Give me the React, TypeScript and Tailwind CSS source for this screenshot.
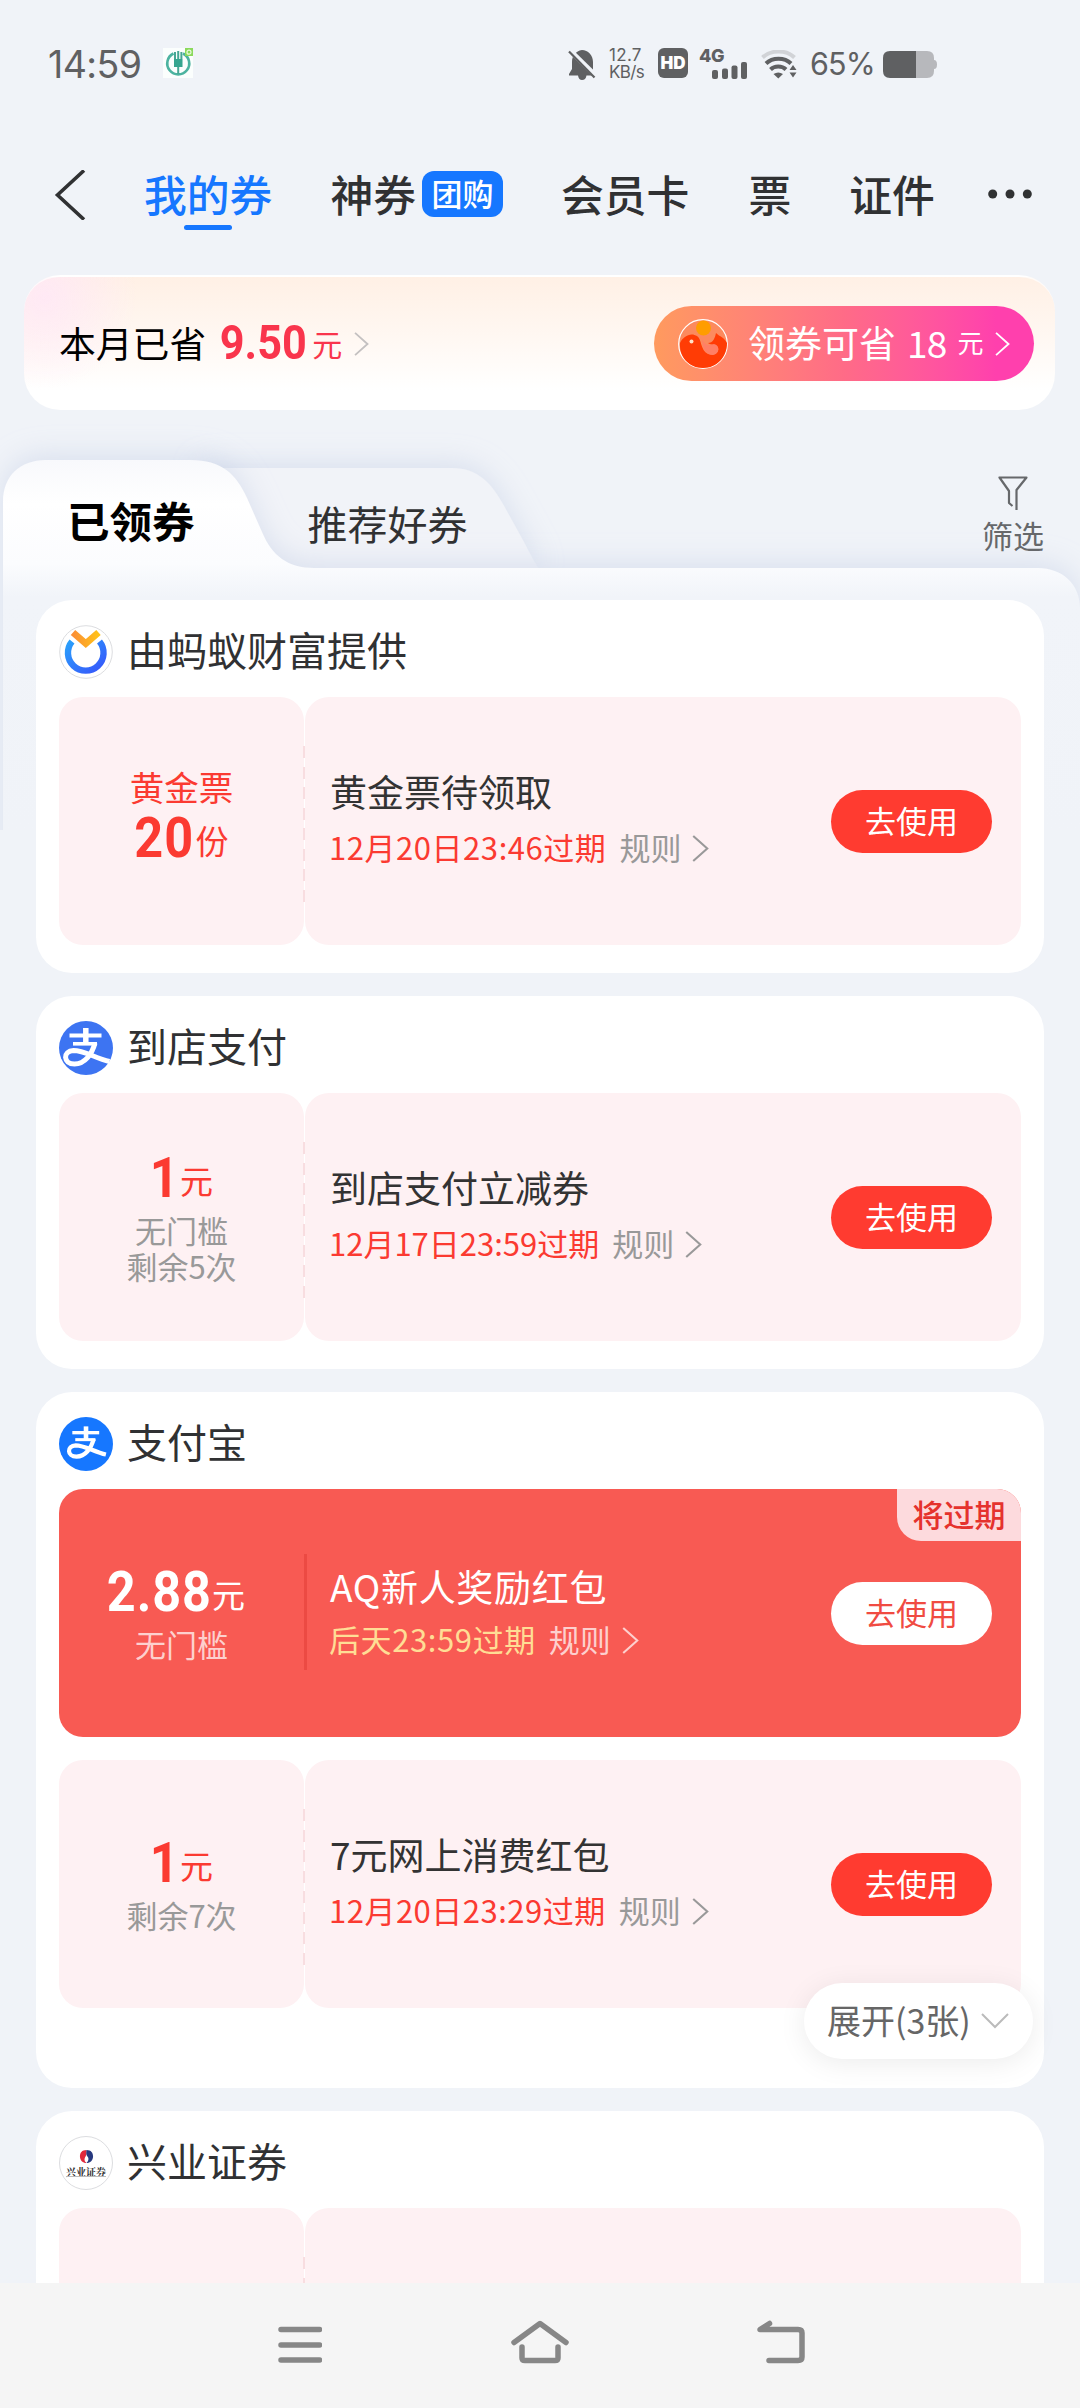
import type { ReactNode } from 'react';
import clsx from 'clsx';

type Coupon = {
  label?: string;
  amount: string;
  amountWidth: string;
  unit: string;
  notes?: string[];
  title: string;
  expire: string;
  expireSpacing?: string;
  urgent?: boolean;
};

const navItems = [
  { label: "神券", badge: "团购", className: "ml-[58px]" },
  { label: "会员卡", className: "ml-[58px]" },
  { label: "票", className: "ml-[59px]" },
  { label: "证件", className: "ml-[58px]" }
];

const goldTicket: Coupon = {
  label: "黄金票",
  amount: "20",
  amountWidth: "w-[60px]",
  unit: "份",
  title: "黄金票待领取",
  expire: "12月20日23:46过期",
  expireSpacing: "tracking-[0.55px]"
};

const storePay: Coupon = {
  amount: "1",
  amountWidth: "w-[29px]",
  unit: "元",
  notes: ["无门槛", "剩余5次"],
  title: "到店支付立减券",
  expire: "12月17日23:59过期"
};

const newUserBonus: Coupon = {
  amount: "2.88",
  amountWidth: "w-[104px]",
  unit: "元",
  notes: ["无门槛"],
  title: "AQ新人奖励红包",
  expire: "后天23:59过期",
  expireSpacing: "tracking-[0.6px]",
  urgent: true
};

const onlineBonus: Coupon = {
  amount: "1",
  amountWidth: "w-[29px]",
  unit: "元",
  notes: ["剩余7次"],
  title: "7元网上消费红包",
  expire: "12月20日23:29过期",
  expireSpacing: "tracking-[0.5px]"
};

function Chevron({ className }: { className: string }) {
  return (
    <svg viewBox="0 0 16 26" className={className} fill="none" stroke="currentColor" strokeWidth="2">
      <path d="M1 1 L14.5 13 L1 25" />
    </svg>
  );
}

function StatusBar() {
  return (
    <div className="flex h-[129px] items-center pl-[48px] text-[#5f6062]">
      <span className="w-[115px] font-['Inter'] text-[37.500px] leading-none tracking-[-0.6px]">14:59</span>
      <svg viewBox="0 0 30 30" className="mt-[-3px] h-[30px] w-[30px]" fill="none">
        <rect width="30" height="30" fill="#fbfefd" />
        <path d="M10.500 5.500 A11 11 0 1 0 20 5.500" stroke="#4cb3a0" strokeWidth="2.600" />
        <path d="M15.200 3 V26 M12 4 V11 M18.400 4 V11" stroke="#46a794" strokeWidth="2" />
        <rect x="11" y="11" width="8.500" height="8" fill="#36a58f" />
        <rect x="22" width="8" height="8" fill="#8bd95c" />
        <circle cx="26" cy="4.200" r="2" stroke="#e9fadd" strokeWidth="1.200" />
      </svg>

      <svg viewBox="0 0 28 32" className="ml-[375px] h-[32px] w-[28px]">
        <path d="M14 1 C7.500 2 4 7 4 13 V20 L1 25 V26.500 H10 C10.500 29.500 12 31 14 31 C16.500 31 18 29.500 18.500 26.500 H25 V13 C25 6 20 1 14 1 Z" fill="#5f6062" />
        <path d="M1.500 1 L28 27" stroke="#f0f3f8" strokeWidth="5" />
        <path d="M1 2.500 L26.500 28.500" stroke="#5f6062" strokeWidth="2.200" />
      </svg>
      <div className="ml-[13px] mt-[-2px] w-[38px] font-['Inter'] text-[17px] leading-[16.500px]">
        <div className="tracking-[0.3px]">12.7</div>
        <div className="tracking-[-0.6px]">KB/s</div>
      </div>
      <div className="ml-[11px] mt-[-3px] flex h-[30px] w-[30px] items-center justify-center rounded-[6px] bg-[#5f6062] font-['Inter'] text-[17px] font-black leading-none text-white">
        HD
      </div>
      <div className="relative ml-[11px] mt-[-2px] h-[30px] w-[50px]">
        <span className="absolute left-0 top-0 font-['Inter'] text-[18px] font-extrabold leading-[14px] tracking-[-0.5px]">4G</span>
        <svg viewBox="0 0 36 17" className="absolute bottom-0 left-[13px] h-[17px] w-[36px]" fill="#5f6062">
          <rect x="0" y="8" width="6" height="9" rx="2" />
          <rect x="10" y="6.500" width="6" height="10.500" rx="2" />
          <rect x="19.500" y="3.500" width="6" height="13.500" rx="2" />
          <rect x="29" y="0" width="6" height="17" rx="2" />
        </svg>
      </div>
      <svg viewBox="0 0 36 29" className="ml-[12px] mt-[-1px] h-[29px] w-[36px]" fill="none">
        <path d="M1.500 7.500 C10 -0.500 25 -0.500 33.500 7.500" stroke="#d1d3d7" strokeWidth="4" />
        <path d="M5 13.500 C11.500 7 23.500 7 30 13.500" stroke="#5f6062" strokeWidth="4" />
        <path d="M9.500 19.500 C13.500 15.500 21 15.500 25 19.500" stroke="#5f6062" strokeWidth="4" />
        <path d="M12.500 24 Q17.300 21 22 24 L17.300 28.500 Z M28.500 20 L32 15 L35.500 20 Z M28.500 22.500 L32 27.500 L35.500 22.500 Z" fill="#5f6062" />
      </svg>
      <span className="ml-[13px] w-[73px] font-['Inter'] text-[30.500px] leading-none tracking-[-0.9px]">65%</span>
      <svg viewBox="0 0 54 27" className="mt-[-1px] h-[27px] w-[54px]">
        <path d="M7 0 H44 Q51 0 51 7 V9 Q54 9 54 13.500 Q54 18 51 18 V20 Q51 27 44 27 H7 Z" fill="#b7b8bc" />
        <path d="M33 0 H7 Q0 0 0 7 V20 Q0 27 7 27 H33 Z" fill="#5f6062" />
      </svg>
    </div>
  );
}

function NavBar() {
  return (
    <div className="flex h-[146px] items-start pl-[54px] text-[42.800px] font-medium leading-[60px] text-[#303133]">
      <svg viewBox="0 0 32 50" className="mt-[41px] h-[50px] w-[32px]" fill="none" stroke="#303133" strokeWidth="3.600">
        <path d="M30 0.500 L3.500 25 L30 49.500" />
      </svg>
      <div className="ml-[58px] mt-[34px] flex flex-col items-center text-[#1677ff]">
        我的券
        <span className="mt-[2px] h-[5px] w-[48px] rounded-full bg-[#1677ff]" />
      </div>
      {navItems.map((item) => (
        <div key={item.label} className={clsx("mt-[34px] flex items-center", item.className)}>
          {item.label}
          {item.badge && (
            <span className="ml-[6px] mt-px flex h-[46px] w-[81px] items-center justify-center rounded-[12px] bg-[#1677ff] text-[31px] leading-[44px] text-white">
              <span className="mt-[-2px]">{item.badge}</span>
            </span>
          )}
        </div>
      ))}
      <svg viewBox="0 0 44 10" className="ml-[53px] mt-[60px] h-[10px] w-[44px]" fill="#303133">
        <circle cx="4.700" cy="5" r="4.500" />
        <circle cx="22" cy="5" r="4.500" />
        <circle cx="39.300" cy="5" r="4.500" />
      </svg>
    </div>
  );
}

function SavingsBanner() {
  return (
    <div className="ml-[24px] flex h-[135px] w-[1031px] items-center rounded-[36px] border-t-2 border-white/70 bg-[radial-gradient(circle_at_2%_15%,rgba(255,232,246,0.9),transparent_9%),linear-gradient(to_bottom,#fff0e5_0%,#fff7f1_42%,#ffffff_85%)] pl-[35px] pr-[21px]">
      <span className="mt-[-3px] text-[36.800px] leading-none text-black">本月已省</span>
      <span className="ml-[14px] mt-[-2px] flex w-[86px] justify-center">
        <span className="inline-block scale-x-[0.9] font-['Roboto'] text-[48px] font-bold leading-none text-[#f9354c]">9.50</span>
      </span>
      <span className="ml-[6px] mt-[-2px] text-[30px] leading-none text-[#f9354c]">元</span>
      <Chevron className="ml-[12px] h-[24px] w-[15px] text-[#c4c1c1]" />

      <div className="ml-auto flex h-[75px] w-[380px] items-center rounded-full bg-linear-to-r from-[#ff9a5e] via-[#ff6b87] via-50% to-[#ff40ad] to-90% pl-[24px] text-white">
        <svg viewBox="0 0 50 50" className="h-[50px] w-[50px]">
          <circle cx="25" cy="25" r="24.300" fill="#fc8a5e" stroke="#fff" strokeWidth="1.200" />
          <circle cx="25.500" cy="9" r="7.500" fill="#ff9d00" />
          <path d="M2 24 C5 17 13 13 19 17 C24 20 22 31 30 35 C37 38 43 32 39 27 C36 25 32 26 30 24 C35 24 37 19 38 14 C42 18 46 18 49 24 C49 38 39 49 25 49 C11 49 1 38 2 24 Z" fill="#ff3c05" />
          <path d="M24 20 C27 27 31 27 36 25 C42 26 42 35 35 36 C26 35 25 29 24 20 Z" fill="#ff7f66" />
          <circle cx="13.500" cy="22.500" r="2" fill="#ffe2c8" />
        </svg>
        <span className="ml-[20px] mt-[-3px] text-[37px] leading-none">领券可省</span>
        <span className="ml-[11px] mt-[-3px] text-[37px] leading-none tracking-[-0.8px]">18</span>
        <span className="ml-[11px] mt-[-3px] text-[26px] leading-none">元</span>
        <Chevron className="ml-[11px] h-[24px] w-[15px]" />
      </div>
    </div>
  );
}

// Folder-shaped tabs; the first one runs into the sheet below
function TabShapes() {
  return (
    <svg viewBox="0 410 1080 440" className="absolute left-0 top-0 h-[440px] w-[1080px]" fill="none">
      <defs>
        <linearGradient id="front" gradientUnits="userSpaceOnUse" x1="0" y1="460" x2="0" y2="830">
          <stop offset="0" stopColor="#f8f9fc" />
          <stop offset="0.12" stopColor="#ffffff" />
          <stop offset="0.28" stopColor="#fbfcfe" />
          <stop offset="0.37" stopColor="#f1f4f9" />
          <stop offset="1" stopColor="#f0f3f8" />
        </linearGradient>
        <filter id="lift" filterUnits="userSpaceOnUse" x="-30" y="410" width="1140" height="420">
          <feDropShadow dx="0" dy="-5" stdDeviation="14" floodColor="#b9c5e0" floodOpacity="0.42" />
        </filter>
      </defs>
      <path filter="url(#lift)" d="M200 468 H452 C478 468 492 484 503 504 L524 542 Q534 562 541 572 H200 Z" fill="#f1f3f8" />
      <path
        filter="url(#lift)"
        d="M3 870 V502 C3 476 20 460 46 460 H190 C222 460 236 474 247 498 L262 532 C272 556 288 568 314 568 H1038 C1062 568 1080 584 1080 608 V870 Z"
        fill="url(#front)"
      />
    </svg>
  );
}

function Tabs() {
  return (
    <div className="flex h-[190px] items-start">
      <div className="ml-[67px] mt-[80px] text-[42.500px] font-bold leading-[60px] text-black">已领券</div>
      <div className="ml-[113px] mt-[83px] text-[40px] leading-[60px] text-[#303133]">推荐好券</div>
      <div className="ml-auto mr-[36px] mt-[66px] flex flex-col items-center text-[#66686b]">
        <svg viewBox="0 0 30 35" className="h-[35px] w-[30px]" fill="none" stroke="#66686b" strokeWidth="2.200" strokeLinejoin="round">
          <path d="M14.500 30 L11 27 V15 L1.500 1.500 H28.500 L18.500 14 V34" />
        </svg>
        <span className="mt-[2px] text-[31px] leading-[44px]">筛选</span>
      </div>
    </div>
  );
}

function AlipayLogo({ small }: { small?: boolean }) {
  return (
    <svg viewBox="0 0 54 54" className="h-[54px] w-[54px]" fill="none">
      <circle cx="27" cy="27" r="27" fill={small ? "#1677ff" : "#3d74f2"} />
      <g transform={small ? "translate(4.500 3.500) scale(0.84)" : undefined} stroke="#fff">
        <path d="M26.800 7 V22" strokeWidth="5.500" />
        <path d="M10.500 14.500 H42.500" strokeWidth="4" />
        <path d="M14 22.800 H38" strokeWidth="3.600" />
        <path d="M36 22 C33 33 26 43 15.500 43 C4 43 3.500 30 14.500 29.500 C25 29.500 36 37 50.500 40.500" strokeWidth="5" />
      </g>
    </svg>
  );
}

function AntFortuneLogo() {
  return (
    <svg viewBox="0 0 54 54" className="h-[54px] w-[54px]" fill="none">
      <defs>
        <linearGradient id="ring" x1="0" y1="0" x2="1" y2="1">
          <stop offset="0" stopColor="#2aa0fb" />
          <stop offset="1" stopColor="#3656fb" />
        </linearGradient>
        <linearGradient id="tick" x1="0" y1="0" x2="1" y2="0">
          <stop offset="0" stopColor="#fb8f35" />
          <stop offset="1" stopColor="#ffc219" />
        </linearGradient>
      </defs>
      <circle cx="27" cy="27" r="26.300" fill="#fff" stroke="#dcdde0" strokeWidth="1" />
      <path d="M13 16.500 A17.800 17.800 0 1 0 40.500 16.500" stroke="url(#ring)" strokeWidth="6.400" />
      <path d="M14 7.500 L26.800 18.500 L39.500 7.500" stroke="url(#tick)" strokeWidth="6.800" />
    </svg>
  );
}

function IndustrialLogo() {
  return (
    <div className="flex h-[54px] w-[54px] flex-col items-center rounded-full border border-[#dcdde0] bg-white pt-[12px]">
      <svg viewBox="0 0 16 16" className="h-[15px] w-[15px]">
        <path d="M8 1 C3 1 1 4 1 8 C1 12 4 15 8 15 C6 13 5 11 7 8 C8 6 8 4 8 1 Z" fill="#e0283c" />
        <path d="M8 1 C13 1 15 4 15 8 C15 12 12 15 8 15 C10 13 11 10 9 8 C7 6 8 3 8 1 Z" fill="#27397f" />
      </svg>
      <span className="mt-[2px] whitespace-nowrap font-['Noto_Serif_CJK_SC','Noto_Sans_CJK_SC',serif] text-[10px] font-bold leading-[11px] text-[#333]">兴业证券</span>
      <span className="mt-[-1px] h-px w-[40px] bg-[#bbb]" />
    </div>
  );
}

function CouponRow({ coupon }: { coupon: Coupon }) {
  const { urgent } = coupon;
  return (
    <div className={clsx("relative flex h-[248px]", urgent && "overflow-hidden rounded-[24px] bg-[#f85a53]")}>
      <div
        className={clsx(
          "flex w-[245px] flex-col items-center justify-center",
          urgent ? "text-white" : "rounded-[24px] bg-[#fef1f3] text-[#fb3a31]"
        )}
      >
        {coupon.label && <div className="mb-[3px] mt-[-14px] text-[34.500px] leading-[44px]">{coupon.label}</div>}
        <div className={clsx("flex h-[54px] items-center", coupon.notes && "mb-[7px]", urgent && "mr-[11px]")}>
          <span className={clsx("flex justify-center", coupon.amountWidth)}>
            <span className="inline-block scale-x-[0.9] font-['Roboto'] text-[56px] font-bold leading-none tracking-[1px]">{coupon.amount}</span>
          </span>
          <span className="ml-px mt-[5px] text-[33px] leading-none">{coupon.unit}</span>
        </div>
        {coupon.notes?.map((note) => (
          <div key={note} className={clsx("text-[31px] leading-[36px]", urgent ? "text-[#fdd0ce]" : "text-[#999]")}>
            {note}
          </div>
        ))}
      </div>
      <div className={clsx("ml-px flex flex-1 items-center pl-[25px] pr-[29px]", !urgent && "rounded-[24px] bg-[#fef1f3]")}>
        <div className="mb-[4px]">
          <div className={clsx("text-[37px] leading-[56px]", urgent ? "tracking-[0.7px] text-white" : "text-[#333]")}>{coupon.title}</div>
          <div className={clsx("flex items-center text-[31px]", urgent ? "leading-[50px]" : "leading-[56px]")}>
            <span className={clsx("ml-[-1px]", coupon.expireSpacing, urgent ? "text-[#ffdd95]" : "text-[#fb3a31]")}>{coupon.expire}</span>
            <span className={clsx("ml-[13px]", urgent ? "text-[#fdd0ce]" : "text-[#999]")}>规则</span>
            <Chevron className={clsx("ml-[11px] mt-[3px] h-[27px] w-[17px]", urgent ? "text-[#fdd0ce]" : "text-[#999]")} />
          </div>
        </div>
        <button
          className={clsx(
            "ml-auto h-[63px] w-[161px] rounded-full pb-[3px] text-[31px] leading-none",
            urgent ? "bg-white text-[#f04b42]" : "bg-[#ff3b30] text-white"
          )}
        >
          去使用
        </button>
      </div>
      {urgent ? (
        <>
          <span className="absolute left-[245px] top-[65px] h-[116px] w-[3px] bg-[#ec4a43]" />
          <span className="absolute right-0 top-0 flex h-[52px] w-[124px] items-center justify-center rounded-bl-[24px] bg-[#fddadd] pb-[3px] text-[31px] font-medium leading-none text-[#e5322d]">
            将过期
          </span>
        </>
      ) : (
        <span className="absolute left-[244px] top-[49px] h-[156px] w-[2px] bg-[repeating-linear-gradient(to_bottom,#f8dde0_0,#f8dde0_12px,transparent_12px,transparent_20.500px)]" />
      )}
    </div>
  );
}

function ShopCard({ logo, name, className, children }: { logo: ReactNode; name: string; className?: string; children: ReactNode }) {
  return (
    <section className={clsx("relative ml-[36px] w-[1008px] rounded-[36px] bg-white px-[23px]", className)}>
      <div className="flex h-[97px] items-center pt-[6px]">
        {logo}
        <h2 className="ml-[14px] mt-[-5px] text-[40px] leading-none text-[#303133]">{name}</h2>
      </div>
      {children}
    </section>
  );
}

function SystemNav() {
  return (
    <div className="fixed bottom-0 left-0 flex h-[125px] w-[1080px] bg-[#f5f5f5] pt-[37px]">
      <svg viewBox="0 0 44 44" className="ml-[278px] h-[44px] w-[44px]" stroke="#878787" strokeWidth="5.500" strokeLinecap="round">
        <path d="M3 9.500 H41.500 M3 25 H41.500 M3 40 H41.500" />
      </svg>
      <svg viewBox="0 0 58 44" className="ml-[189px] h-[44px] w-[58px]" fill="none" stroke="#878787" strokeWidth="5.500" strokeLinecap="round" strokeLinejoin="round">
        <path d="M3 22.500 L29 3.500 L55 22.500 M11 27 V38 Q11 40.500 14 40.500 H44 Q47 40.500 47 38 V27" />
      </svg>
      <svg viewBox="0 0 49 44" className="ml-[187px] h-[44px] w-[49px]" fill="none" stroke="#878787" strokeWidth="5.500" strokeLinecap="round" strokeLinejoin="round">
        <path d="M13 40.500 H42 Q46 40.500 46 37 V13 Q46 9.500 42 9.500 H4 L13.500 3.500" />
      </svg>
    </div>
  );
}

export default function App() {
  return (
    <div className="h-[2408px] w-[1080px] overflow-hidden bg-[#f0f3f8] font-['Noto_Sans_CJK_SC',sans-serif]">
      <StatusBar />
      <NavBar />
      <SavingsBanner />
      <div className="relative">
        <TabShapes />
        <div className="relative">
          <Tabs />
          <div className="flex flex-col gap-[23px]">
            <ShopCard logo={<AntFortuneLogo />} name="由蚂蚁财富提供" className="h-[373px]">
              <CouponRow coupon={goldTicket} />
            </ShopCard>
            <ShopCard logo={<AlipayLogo />} name="到店支付" className="h-[373px]">
              <CouponRow coupon={storePay} />
            </ShopCard>
            <ShopCard logo={<AlipayLogo small />} name="支付宝" className="h-[696px]">
              <div className="flex flex-col gap-[23px]">
                <CouponRow coupon={newUserBonus} />
                <CouponRow coupon={onlineBonus} />
              </div>
              <button className="absolute bottom-[29px] right-[11px] flex h-[76px] w-[229px] items-center rounded-full bg-white pl-[23px] text-[34px] leading-none text-[#666] shadow-[0_4px_28px_rgba(0,0,0,0.08)]">
                <span className="mt-[-3px]">展开(3张)</span>
                <svg viewBox="0 0 28 16" className="ml-[10px] h-[16px] w-[28px]" fill="none" stroke="#bbb" strokeWidth="2">
                  <path d="M1 1 L14 14 L27 1" />
                </svg>
              </button>
            </ShopCard>
            <ShopCard logo={<IndustrialLogo />} name="兴业证券" className="h-[373px]">
              <CouponRow coupon={{ amount: "", amountWidth: "w-0", unit: "", title: "", expire: "" }} />
            </ShopCard>
          </div>
        </div>
      </div>
      <SystemNav />
    </div>
  );
}
